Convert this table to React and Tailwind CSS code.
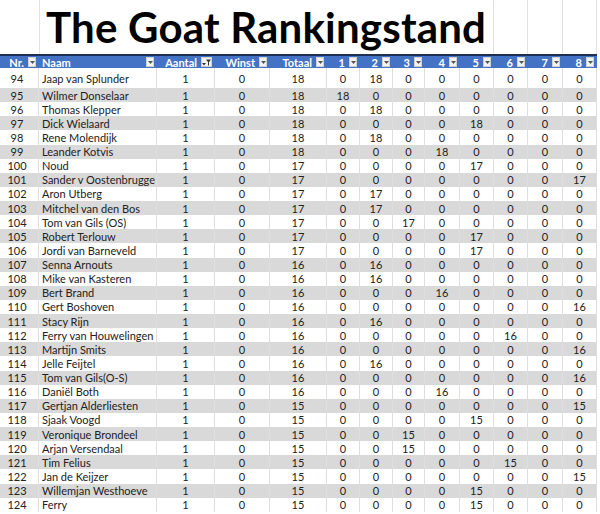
import React from "react";

const COLS = [39, 118, 58, 55, 57, 33, 33, 32, 35, 34, 34, 35, 34];

const rows = [
  [94, "Jaap van Splunder", 18, [0, 18, 0, 0, 0, 0, 0, 0]],
  [95, "Wilmer Donselaar", 18, [18, 0, 0, 0, 0, 0, 0, 0]],
  [96, "Thomas Klepper", 18, [0, 18, 0, 0, 0, 0, 0, 0]],
  [97, "Dick Wielaard", 18, [0, 0, 0, 0, 18, 0, 0, 0]],
  [98, "Rene Molendijk", 18, [0, 18, 0, 0, 0, 0, 0, 0]],
  [99, "Leander Kotvis", 18, [0, 0, 0, 18, 0, 0, 0, 0]],
  [100, "Noud", 17, [0, 0, 0, 0, 17, 0, 0, 0]],
  [101, "Sander v Oostenbrugge", 17, [0, 0, 0, 0, 0, 0, 0, 17]],
  [102, "Aron Utberg", 17, [0, 17, 0, 0, 0, 0, 0, 0]],
  [103, "Mitchel van den Bos", 17, [0, 17, 0, 0, 0, 0, 0, 0]],
  [104, "Tom van Gils (OS)", 17, [0, 0, 17, 0, 0, 0, 0, 0]],
  [105, "Robert Terlouw", 17, [0, 0, 0, 0, 17, 0, 0, 0]],
  [106, "Jordi van Barneveld", 17, [0, 0, 0, 0, 17, 0, 0, 0]],
  [107, "Senna Arnouts", 16, [0, 16, 0, 0, 0, 0, 0, 0]],
  [108, "Mike van Kasteren", 16, [0, 16, 0, 0, 0, 0, 0, 0]],
  [109, "Bert Brand", 16, [0, 0, 0, 16, 0, 0, 0, 0]],
  [110, "Gert Boshoven", 16, [0, 0, 0, 0, 0, 0, 0, 16]],
  [111, "Stacy Rijn", 16, [0, 16, 0, 0, 0, 0, 0, 0]],
  [112, "Ferry van Houwelingen", 16, [0, 0, 0, 0, 0, 16, 0, 0]],
  [113, "Martijn Smits", 16, [0, 0, 0, 0, 0, 0, 0, 16]],
  [114, "Jelle Feijtel", 16, [0, 16, 0, 0, 0, 0, 0, 0]],
  [115, "Tom van Gils(O-S)", 16, [0, 0, 0, 0, 0, 0, 0, 16]],
  [116, "Daniël Both", 16, [0, 0, 0, 16, 0, 0, 0, 0]],
  [117, "Gertjan Alderliesten", 15, [0, 0, 0, 0, 0, 0, 0, 15]],
  [118, "Sjaak Voogd", 15, [0, 0, 0, 0, 15, 0, 0, 0]],
  [119, "Veronique Brondeel", 15, [0, 0, 15, 0, 0, 0, 0, 0]],
  [120, "Arjan Versendaal", 15, [0, 0, 15, 0, 0, 0, 0, 0]],
  [121, "Tim Felius", 15, [0, 0, 0, 0, 0, 15, 0, 0]],
  [122, "Jan de Keijzer", 15, [0, 0, 0, 0, 0, 0, 0, 15]],
  [123, "Willemjan Westhoeve", 15, [0, 0, 0, 0, 15, 0, 0, 0]],
  [124, "Ferry", 15, [0, 0, 0, 0, 15, 0, 0, 0]],
];

function Drop() {
  return (
    <span className="flex h-[10px] w-[8px] shrink-0 items-center justify-center bg-[#f3f3f3] border border-[#d0d0d0]">
      <svg width="5" height="3" viewBox="0 0 5 3">
        <path d="M0 0 L5 0 L2.5 3 Z" fill="#555" />
      </svg>
    </span>
  );
}

function FilterDrop() {
  return (
    <span className="flex h-[10px] w-[11px] shrink-0 items-center justify-center bg-[#f3f3f3] border border-[#d0d0d0]">
      <svg width="9" height="7" viewBox="0 0 9 7">
        <path d="M0 4 L4 4 L2 6.5 Z" fill="#333" />
        <path d="M4 0.5 L9 0.5 L7 3 L7 6.5 L6 6.5 L6 3 Z" fill="#333" />
      </svg>
    </span>
  );
}

const headers = ["Nr.", "Naam", "Aantal", "Winst", "Totaal", "1", "2", "3", "4", "5", "6", "7", "8"];

export default function App() {
  return (
    <div
      className="relative h-[514px] w-[600px] overflow-hidden bg-white text-[#222]"
      style={{ fontFamily: "Lato, 'Open Sans', sans-serif" }}
    >
      {/* Title area */}
      <div className="flex h-[54px]">
        <div className="h-full w-[40px] border-r border-[#e2e2e2]" />
        <div className="h-full w-[454px] border-r border-[#e2e2e2]">
          <div className="pl-[6px] pt-[6px] text-[42px] font-bold leading-[42px] tracking-[0.2px] text-black whitespace-nowrap">
            The Goat Rankingstand
          </div>
        </div>
        <div className="h-full w-[34px] border-r border-[#e2e2e2]" />
        <div className="h-full w-[35px] border-r border-[#e2e2e2]" />
        <div className="h-full w-[34px] border-r border-[#e2e2e2]" />
        <div className="h-full flex-1" />
      </div>

      {/* Header */}
      <div className="flex">
        <div className="flex w-[597px] border-t-2 border-[#1e2f52] bg-[#4472c4]">
          {headers.map((h, i) => (
            <div
              key={h}
              style={{ width: COLS[i] }}
              className={`flex h-[12px] shrink-0 items-center gap-[4px] pr-[3px] text-[11px] font-bold leading-none text-white ${
                i === 1 ? "justify-between pl-[3px]" : "justify-end"
              }`}
            >
              <span>{h}</span>
              {i === 2 ? <FilterDrop /> : <Drop />}
            </div>
          ))}
        </div>
      </div>

      {/* Rows */}
      {rows.map((r, idx) => {
        const gray = idx % 2 === 1;
        const cells = [r[0], r[1], 1, 0, r[2], ...r[3]];
        return (
          <div
            key={r[0]}
            className={`flex w-[597px] ${idx === 0 ? "h-[20px]" : "h-[14.14px]"} ${
              gray ? "bg-[#d9d9d9]" : "bg-white"
            }`}
          >
            {cells.map((c, i) => (
              <div
                key={i}
                style={{ width: COLS[i] }}
                className={`flex shrink-0 items-center border-r border-[#dedede] text-[11px] leading-none ${
                  i === 1 ? "justify-start pl-[3px] whitespace-nowrap" : "justify-center"
                } ${i === 0 ? "pr-[4px]" : ""}`}
              >
                {c}
              </div>
            ))}
          </div>
        );
      })}
    </div>
  );
}
